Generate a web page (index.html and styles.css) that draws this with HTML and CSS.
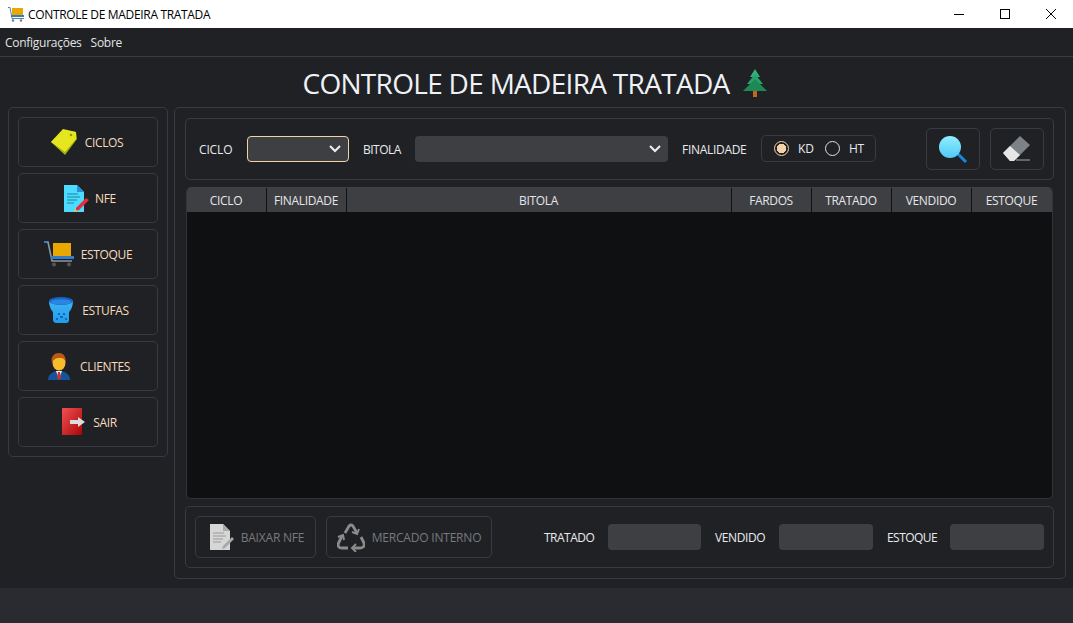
FILE: index.html
```html
<!DOCTYPE html>
<html lang="pt">
<head>
<meta charset="utf-8">
<title>CONTROLE DE MADEIRA TRATADA</title>
<link rel="stylesheet" href="styles.css">
</head>
<body>
<header class="titlebar">
  <svg class="app-icon" width="16" height="15" viewBox="0 0 16 15"><path d="M0 .5h2l2 11h12" fill="none" stroke="#5a7f9c"/><rect x="4" y="1" width="11" height="7" fill="#e8a800"/><rect x="3" y="8" width="13" height="2" fill="#2f7fc8"/><circle cx="5" cy="13.500" r="1.200" fill="#777"/><circle cx="13" cy="13.500" r="1.200" fill="#777"/></svg>
  <span class="app-title">CONTROLE DE MADEIRA TRATADA</span>
  <div class="win-controls">
    <svg width="10" height="10" viewBox="0 0 10 10"><path d="M0 5.500h10" stroke="#000"/></svg>
    <svg width="10" height="10" viewBox="0 0 10 10"><rect x=".5" y=".5" width="9" height="9" fill="none" stroke="#000"/></svg>
    <svg width="10" height="10" viewBox="0 0 10 10"><path d="M0 0l10 10M10 0L0 10" stroke="#000"/></svg>
  </div>
</header>
<nav class="menubar"><span>Configurações</span><span>Sobre</span></nav>
<main class="content">
  <h1 class="heading">CONTROLE DE MADEIRA TRATADA
    <svg class="tree" width="24" height="28" viewBox="0 0 24 28"><rect x="10" y="22" width="4" height="6" fill="#c4651a"/><path d="M12 0l5 8H7z" fill="#35b07a"/><path d="M12 5l8 10H4z" fill="#2aa06c"/><path d="M12 10l12 12H0z" fill="#1d8a56"/></svg>
  </h1>
  <div class="columns">
    <aside class="panel sidebar">
      <button class="side-btn gap-8 shift-back"><svg width="26" height="26" viewBox="0 0 26 26"><path d="M0 13L12 1 25 3l1 7-12 16z" fill="#a3b010"/><path d="M0 13L12 0l13 3 0 7-11 13z" fill="#e6e61e"/><circle cx="20" cy="6" r="1.300" fill="#8d9a10"/></svg>CICLOS</button>
      <button class="side-btn gap-6 shift-4"><svg width="25" height="27" viewBox="0 0 25 27"><path d="M0 0h13l7 7v20H0z" fill="#4ddcff"/><path d="M13 0l7 7h-7z" fill="#2a8fd8"/><path d="M3 9h11M3 12h13M3 15h10M3 18h7" stroke="#1583a8" stroke-width="1.200"/><path d="M12 23l10-10 3 2-10 10-3 1z" fill="#e82c3a"/><path d="M11 24l-1 3 4-1z" fill="#f0c040"/></svg>NFE</button>
      <button class="side-btn gap-7"><svg width="30" height="26" viewBox="0 0 30 26"><path d="M1 1h3l4 19h20" fill="none" stroke="#8a97a3" stroke-width="1.600"/><rect x="0" y="0" width="3" height="2" fill="#2f7fc8"/><rect x="9" y="2" width="18" height="13" fill="#e8a800"/><rect x="7" y="15" width="23" height="3" fill="#2f7fc8"/><circle cx="10" cy="23.500" r="2" fill="#555"/><circle cx="25" cy="23.500" r="2" fill="#555"/></svg>ESTOQUE</button>
      <button class="side-btn gap-9 shift-2"><svg width="24" height="26" viewBox="0 0 24 26"><defs><linearGradient id="bowl" x1="0" y1="0" x2="0" y2="1"><stop offset="0" stop-color="#3fb4f5"/><stop offset="1" stop-color="#1e9cec"/></linearGradient></defs><path d="M0 4c0 6 3 10 4 11v8c0 2 2 3 3 3h10c2 0 3-1 3-3v-8c2-2 4-6 4-11z" fill="url(#bowl)"/><ellipse cx="12" cy="4" rx="12" ry="4" fill="#1564c0"/><ellipse cx="12" cy="5" rx="10.500" ry="2.800" fill="#2a86e0"/><path d="M9 16h2v2H9zM14 16h2v2h-2zM11 19h3v2h-3zM7 21h2v2H7zM16 21h2v2h-2z" fill="#1564c0"/></svg>ESTUFAS</button>
      <button class="side-btn gap-10 shift-2"><svg width="22" height="27" viewBox="0 0 22 27"><path d="M0 27c0-5 3-7 8-9h6c5 2 8 4 8 9z" fill="#14549c"/><path d="M8 18h6l-3 8z" fill="#eee"/><path d="M10 19h2l1 6-2 2-2-2z" fill="#c93030"/><ellipse cx="11" cy="9.500" rx="6.500" ry="8" fill="#f7bc2e"/><path d="M4 10C2 3 7 0 11 0c5 0 7 4 7 10-1-3-2-5-6-5-5 0-7 2-8 5z" fill="#b85a14"/></svg>CLIENTES</button>
      <button class="side-btn gap-8 shift-3"><svg width="23" height="28" viewBox="0 0 23 28"><defs><linearGradient id="door" x1="0" y1="0" x2="1" y2="1"><stop offset="0" stop-color="#f25055"/><stop offset="1" stop-color="#a80606"/></linearGradient></defs><rect width="20" height="27" rx="1" fill="url(#door)"/><path d="M8 12h8V9l7 5-7 5v-3H8z" fill="#dcdcdc"/></svg>SAIR</button>
    </aside>
    <section class="panel main-panel">
      <div class="box filters">
        <label class="lbl lbl-ciclo">CICLO</label>
        <div class="combo combo-ciclo"><svg class="chev" width="12" height="8" viewBox="0 0 12 8"><path d="M1 1l5 5 5-5" fill="none" stroke="#eee" stroke-width="2"/></svg></div>
        <label class="lbl lbl-bitola">BITOLA</label>
        <div class="combo combo-bitola"><svg class="chev" width="12" height="8" viewBox="0 0 12 8"><path d="M1 1l5 5 5-5" fill="none" stroke="#eee" stroke-width="2"/></svg></div>
        <label class="lbl lbl-fin">FINALIDADE</label>
        <div class="radios">
          <span class="radio on"></span><span class="lbl r-kd">KD</span>
          <span class="radio"></span><span class="lbl">HT</span>
        </div>
        <button class="icon-btn btn-search"><svg width="29" height="27" viewBox="0 0 29 27"><defs><linearGradient id="lens" x1="0" y1="0" x2="0" y2="1"><stop offset="0" stop-color="#8fefff"/><stop offset="1" stop-color="#52c8f5"/></linearGradient></defs><path d="M17 16l10 10" stroke="#1787d8" stroke-width="3"/><circle cx="11" cy="11" r="11" fill="url(#lens)"/></svg></button>
        <button class="icon-btn"><svg width="28" height="26" viewBox="0 0 28 26"><path d="M0 17L17 0l10 9-16 16H7z" fill="#7d8286"/><path d="M0 17l7-7 10 9-6 6H7z" fill="#e6e6e6"/><path d="M13 24h14" stroke="#666" stroke-width="2"/></svg></button>
      </div>
      <div class="table">
        <div class="thead"><span>CICLO</span><span>FINALIDADE</span><span>BITOLA</span><span>FARDOS</span><span>TRATADO</span><span>VENDIDO</span><span>ESTOQUE</span></div>
        <div class="tbody"></div>
      </div>
      <div class="box totals">
        <button class="dis-btn btn-nfe"><svg width="24" height="26" viewBox="0 0 24 26"><path d="M0 0h13l7 7v19H0z" fill="#d6d6d6"/><path d="M13 0l7 7h-7z" fill="#aaa"/><path d="M3 9h11M3 12h13M3 15h10M3 18h8" stroke="#999" stroke-width="1.200"/><path d="M13 22l9-9 2 2-9 9-3 1z" fill="#a8a8a8"/></svg>BAIXAR NFE</button>
        <button class="dis-btn btn-mi"><svg width="28" height="29" viewBox="0 0 28 29" fill="none" stroke="#8b8b8b" stroke-width="2.800"><path d="M8 10l4-7q2-2 4 0l4 7"/><path d="M15 9l5 2 2-5" stroke-width="2"/><path d="M5 13L1.500 20Q0 25 5 25h6"/><path d="M1 14l5-2 1 5" stroke-width="2"/><path d="M24 14l3 6q1 5-4 5h-7"/><path d="M19 21l-4 4 4 4" stroke-width="2"/></svg>MERCADO INTERNO</button>
        <span class="lbl lbl-t">TRATADO</span><div class="field"></div>
        <span class="lbl lbl-v">VENDIDO</span><div class="field field-w"></div>
        <span class="lbl lbl-e">ESTOQUE</span><div class="field field-w"></div>
      </div>
    </section>
  </div>
</main>
<footer class="statusbar"></footer>
</body>
</html>
```
FILE: styles.css
```css
* { box-sizing: border-box; }
html, body { margin: 0; height: 100%; }
body { width: 1073px; height: 623px; overflow: hidden; display: flex; flex-direction: column; background: #202125; font-family: "Open Sans", "Noto Sans", sans-serif; font-size: 12px; color: #e8e8e8; }
button { font: inherit; background: none; padding: 0; }
.titlebar { height: 28px; background: #fff; color: #000; display: flex; align-items: center; padding-left: 8px; flex: none; }
.app-icon { margin-right: 4px; }
.app-title { font-size: 12px; letter-spacing: -.33px; }
.win-controls { margin-left: auto; display: flex; gap: 36px; padding-right: 17px; }
.menubar { height: 29px; border-bottom: 1px solid #3b3c40; display: flex; align-items: center; gap: 9px; padding-left: 5px; flex: none; letter-spacing: -.27px; color: #e4e4e4; }
.content { flex: 1; padding: 0 8px; display: flex; flex-direction: column; min-height: 0; }
.heading { margin: 0; height: 50px; font-size: 28px; font-weight: 400; color: #eef2f6; display: flex; align-items: center; justify-content: center; gap: 13px; letter-spacing: -.7px; white-space: nowrap; padding: 2px 4px 0 0; }
.tree { flex: none; margin-top: -1px; }
.columns { display: flex; gap: 6px; align-items: flex-start; }
.panel { border: 1px solid #3a3b40; border-radius: 5px; }
.sidebar { width: 160px; flex: none; padding: 9px; display: flex; flex-direction: column; gap: 6px; }
.side-btn { height: 50px; border: 1px solid #3a3b40; border-radius: 5px; color: #f6dcbc; display: flex; align-items: center; justify-content: center; letter-spacing: -.35px; }
.gap-6 { gap: 6px; }
.gap-7 { gap: 7px; }
.gap-8 { gap: 8px; }
.gap-9 { gap: 9px; }
.gap-10 { gap: 10px; }
.shift-back { padding-right: 2px; }
.shift-2 { padding-left: 2px; }
.shift-3 { padding-left: 3px; }
.shift-4 { padding-left: 4px; }
.main-panel { width: 892px; height: 472px; flex: none; padding: 10px 11px 10px 10px; display: flex; flex-direction: column; }
.box { border: 1px solid #3a3b40; border-radius: 5px; height: 62px; display: flex; align-items: center; flex: none; width: 869px; }
.filters { padding-left: 13px; }
.lbl { letter-spacing: -.4px; color: #e8eaec; white-space: nowrap; }
.lbl-ciclo { width: 48px; letter-spacing: -.15px; }
.lbl-bitola { width: 52px; margin-left: 14px; letter-spacing: -.5px; }
.lbl-fin { width: 79px; margin-left: 14px; letter-spacing: -.3px; }
.combo { height: 26px; background: #3e3f43; border-radius: 4px; display: flex; align-items: center; justify-content: flex-end; padding-right: 7px; }
.combo-ciclo { width: 102px; border: 1px solid #f3d2a8; }
.combo-bitola { width: 253px; }
.radios { width: 115px; height: 27px; border: 1px solid #3a3b40; border-radius: 5px; display: flex; align-items: center; padding-left: 12px; margin-bottom: 1px; }
.radio { width: 15px; height: 15px; border-radius: 50%; border: 1.500px solid #e0e0e0; margin-right: 9px; flex: none; }
.radio.on { border-color: #f3d2a8; background: radial-gradient(circle, #f3d2a8 0 4.500px, transparent 5px); }
.r-kd { margin-right: 11px; letter-spacing: 0; }
.icon-btn { width: 54px; height: 42px; border: 1px solid #3a3b40; border-radius: 5px; display: flex; align-items: center; justify-content: center; margin-left: 10px; }
.btn-search { margin-left: 50px; }
.table { width: 867px; height: 312px; margin: 7px 0 7px 1px; background: #0f1012; border: 1px solid #333438; border-top: 0; border-radius: 5px; overflow: hidden; flex: none; display: flex; flex-direction: column; }
.thead { height: 25px; background: #3e3f43; display: grid; grid-template-columns: 80px 80px 385px 80px 80px 80px 1fr; flex: none; }
.thead span { display: flex; align-items: center; justify-content: center; border-right: 1px solid #0f1012; color: #e4e6e8; letter-spacing: -.35px; margin-top: 1px; padding-right: 1px; }
.thead span:last-child { border-right: 0; }
.tbody { flex: 1; }
.totals { padding-left: 9px; }
.dis-btn { height: 42px; border: 1px solid #3a3b40; border-radius: 5px; color: #77797c; display: flex; align-items: center; justify-content: center; gap: 7px; letter-spacing: -.2px; white-space: nowrap; }
.btn-nfe { width: 121px; margin-right: 10px; padding-left: 3px; }
.btn-mi { width: 166px; }
.lbl-t { margin-left: 52px; width: 64px; letter-spacing: -.5px; }
.lbl-v { margin-left: 14px; width: 64px; }
.lbl-e { margin-left: 14px; width: 63px; letter-spacing: -.55px; }
.field { width: 93px; height: 26px; background: #3e3f43; border-radius: 4px; }
.field-w { width: 94px; }
.statusbar { height: 35px; background: #2a2b30; flex: none; }
```
